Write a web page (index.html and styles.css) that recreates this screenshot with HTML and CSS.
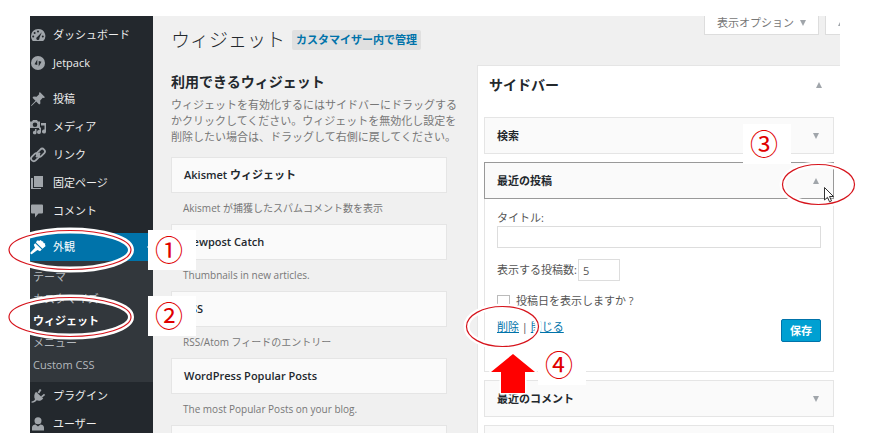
FILE: index.html
```html
<!DOCTYPE html>
<html lang="ja">
<head>
    <meta charset="UTF-8">
    <meta name="viewport" content="width=device-width, initial-scale=1.0">
    <title>ウィジェット</title>
    <link rel="stylesheet" href="styles.css">
</head>
<body>
    <div class="admin">
        <nav class="menu">
            <a href="#" class="menu-item">
                <svg class="icon" viewBox="0 0 16 16"><path d="M8 2a7 7 0 0 0-7 7c0 1.900.7 3.700 1.800 5h10.400A7 7 0 0 0 8 2z"/><g fill="#23282d"><circle cx="8" cy="4.500" r="1"/><circle cx="4.600" cy="6" r="1"/><circle cx="3.200" cy="9.500" r="1"/><circle cx="12.800" cy="9.500" r="1"/><path d="M11.800 5.200 9.400 11a1.600 1.600 0 1 1-2.200-1z"/></g></svg>
                ダッシュボード
            </a>
            <a href="#" class="menu-item">
                <svg class="icon" viewBox="0 0 16 16"><circle cx="8" cy="8" r="7"/><path fill="#23282d" d="M7.300 4.500v5.400L4.500 9.200zM8.700 11.500V6.100l2.800.7z"/></svg>
                Jetpack
            </a>
            <a href="#" class="menu-item group-start">
                <svg class="icon" viewBox="0 0 16 16"><path d="M9.800 1 15 6.200l-1.300.8-1-.2-2.500 2.600.2 3-1.200 1.100-3-3L1.500 15 1 14.500l4.500-4.700-3-3 1.100-1.200 3 .2 2.600-2.500-.2-1z"/></svg>
                投稿
            </a>
            <a href="#" class="menu-item">
                <svg class="icon" viewBox="0 0 16 16"><path fill-rule="evenodd" d="M0 2.500h2L3 1h4l1 1.500h2V9H0zM5 3.500a2.300 2.300 0 1 0 0 4.600 2.300 2.300 0 0 0 0-4.600z"/><path d="M11 4h5v8.500a2 2 0 1 1-1.500-1.900V6.500H11zM9 8.500h2V13a2 2 0 1 1-1.500-1.900V10H9zM5 10h1.500v3.500a1.800 1.800 0 1 1-1.500-1.700z"/></svg>
                メディア
            </a>
            <a href="#" class="menu-item">
                <svg class="icon" viewBox="0 0 16 16"><g fill="none" stroke="currentColor" stroke-width="1.800"><rect x="6.400" y="3" width="9" height="5.400" rx="2.700" transform="rotate(-45 10.900 5.700)"/><rect x=".6" y="7.600" width="9" height="5.400" rx="2.700" transform="rotate(-45 5.100 10.300)"/><path d="m6 10 4-4"/></g></svg>
                リンク
            </a>
            <a href="#" class="menu-item">
                <svg class="icon" viewBox="0 0 16 16"><path d="M4 1h9v11H4zM1 3h2v10h8v1H1z"/></svg>
                固定ページ
            </a>
            <a href="#" class="menu-item">
                <svg class="icon" viewBox="0 0 16 16"><path d="M2 1.500h10a1 1 0 0 1 1 1v7a1 1 0 0 1-1 1H8.500L5 14.500v-4H2a1 1 0 0 1-1-1v-7a1 1 0 0 1 1-1z"/></svg>
                コメント
            </a>
            <a href="#" class="menu-item group-start current">
                <svg class="icon" viewBox="0 0 16 16"><path d="m7 1.500 2.500.3L10.800 1l1 1.300 1.400.2.3 1.400 1.700.7-.2 1.500.7 1-3.200 2.700L6 3.500zM5.200 4.200l6.600 6.200-1.800 1.800-2.500-1.200L2 15c-1 .6-2-.4-1.500-1.400L5 8.700 3.800 5.800z"/></svg>
                外観
            </a>
            <div class="submenu">
                <a href="#">テーマ</a>
                <a href="#">カスタマイズ</a>
                <a href="#" class="active">ウィジェット</a>
                <a href="#">メニュー</a>
                <a href="#">Custom CSS</a>
            </div>
            <a href="#" class="menu-item">
                <svg class="icon" viewBox="0 0 16 16"><path d="m7.500 4.500 2.400-3.600 1.600 1.100-2.300 3.500zM11 8.200l3-2.500 1.200 1.400-3 2.500zM6 3.700l7.200 6.800c-1.800 2.300-4.400 2.800-6.500 1.800C5.500 14 4 15 1.500 14.800l.2-1.600c1.500 0 2.500-.6 3.300-2C3.800 9 4 6 6 3.700z"/></svg>
                プラグイン
            </a>
            <a href="#" class="menu-item">
                <svg class="icon" viewBox="0 0 16 16"><circle cx="8" cy="4.800" r="3.500"/><path d="M2 14.500v-3c0-2 1.800-3 3.600-3L8 10.500l2.400-2c1.800 0 3.600 1 3.600 3v3z"/></svg>
                ユーザー
            </a>
        </nav>

        <main class="content">
            <header class="page-head">
                <h1>ウィジェット</h1>
                <a href="#" class="title-action">カスタマイザー内で管理</a>
                <div class="screen-tabs">
                    <button type="button" class="tab">表示オプション <i class="caret down"></i></button>
                    <button type="button" class="tab tab-help" aria-label="ヘルプ"><i class="caret up"></i></button>
                </div>
            </header>

            <div class="columns">
                <section class="available">
                    <h2>利用できるウィジェット</h2>
                    <p class="intro">ウィジェットを有効化するにはサイドバーにドラッグする<br>かクリックしてください。ウィジェットを無効化し設定を<br>削除したい場合は、ドラッグして右側に戻してください。</p>
                    <h3 class="card">Akismet ウィジェット</h3>
                    <p class="card-text">Akismet が捕獲したスパムコメント数を表示</p>
                    <h3 class="card">Newpost Catch</h3>
                    <p class="card-text">Thumbnails in new articles.</p>
                    <h3 class="card">RSS</h3>
                    <p class="card-text">RSS/Atom フィードのエントリー</p>
                    <h3 class="card">WordPress Popular Posts</h3>
                    <p class="card-text">The most Popular Posts on your blog.</p>
                    <h3 class="card"></h3>
                </section>

                <section class="sidebar-area">
                    <button type="button" class="area-head">サイドバー <i class="caret up"></i></button>
                    <div class="widgets">
                        <button type="button" class="widget-head">検索 <i class="caret down"></i></button>
                        <div class="widget-open">
                            <button type="button" class="widget-head open">最近の投稿 <i class="caret up"></i></button>
                            <form class="widget-form">
                                <label for="title">タイトル:</label>
                                <input type="text" id="title" class="title-input">
                                <div class="row count-row">
                                    <label for="count">表示する投稿数:</label>
                                    <input type="text" id="count" class="count-input" value="5">
                                </div>
                                <div class="row date-row">
                                    <input type="checkbox" id="show-date">
                                    <label for="show-date">投稿日を表示しますか ?</label>
                                </div>
                                <div class="row actions">
                                    <span class="links"><a href="#">削除</a> | <a href="#">閉じる</a></span>
                                    <button type="button" class="save">保存</button>
                                </div>
                            </form>
                        </div>
                        <button type="button" class="widget-head">最近のコメント <i class="caret down"></i></button>
                        <button type="button" class="widget-head"></button>
                    </div>
                </section>
            </div>
        </main>
    </div>

    <!-- 手順の番号と印 -->
    <svg class="marks" width="870" height="433" viewBox="0 0 870 433">
        <g fill="none" stroke="#fff" stroke-width="6">
            <ellipse cx="70" cy="250" rx="61" ry="19.500"/>
            <ellipse cx="70" cy="317" rx="61" ry="19.500"/>
            <ellipse cx="818.500" cy="184.500" rx="36" ry="20"/>
            <ellipse cx="502.500" cy="326.500" rx="36" ry="20"/>
        </g>
        <g fill="none" stroke="#d6141c" stroke-width="1.200">
            <ellipse cx="70" cy="250" rx="61" ry="19.500"/>
            <ellipse cx="70" cy="317" rx="61" ry="19.500"/>
            <ellipse cx="818.500" cy="184.500" rx="36" ry="20"/>
            <ellipse cx="502.500" cy="326.500" rx="36" ry="20"/>
        </g>
        <path fill="#f00" stroke="#fff" stroke-width="3" paint-order="stroke" d="M513 354l22 18h-10v21h-24v-21h-10z"/>
        <path fill="#fff" stroke="#333" d="M824.500 187.500v12.500l3-2.700 2 4.500 2-1-2-4.300h4z"/>
    </svg>
    <span class="step step-1">①</span>
    <span class="step step-2">②</span>
    <span class="step step-3">③</span>
    <span class="step step-4">④</span>
</body>
</html>
```

FILE: styles.css
```css
* {
    box-sizing: border-box;
}

body {
    position: relative;
    margin: 0;
    height: 100vh;
    padding: 16px 30px 0;
    overflow: hidden;
    background: #fff;
    color: #555;
    font-family: "Open Sans", "Noto Sans CJK JP", sans-serif;
    font-size: 11px;
    line-height: 16px;
}

h1, h2, h3, p {
    margin: 0;
}

button, input {
    font: inherit;
    color: inherit;
}

a {
    color: #0073aa;
}

.admin {
    display: flex;
    height: 100%;
    overflow: hidden;
    background: #f0f0f0;
}

/* 左メニュー */
.menu {
    flex: 0 0 123px;
    padding-top: 5px;
    background: #23282d;
}

.menu-item {
    position: relative;
    display: flex;
    align-items: center;
    gap: 7px;
    height: 28px;
    color: #eee;
    text-decoration: none;
    white-space: nowrap;
}

.group-start {
    margin-top: 8px;
}

.icon {
    flex: none;
    width: 16px;
    height: 16px;
    color: #a0a5aa;
    fill: currentColor;
}

.current {
    background: #0073aa;
    color: #fff;
}

.current .icon {
    color: #fff;
}

.current::after {
    content: "";
    position: absolute;
    right: 0;
    border: 6px solid transparent;
    border-right-color: #f0f0f0;
}

.submenu {
    padding: 5px 0 6px;
    background: #32373c;
}

.submenu a {
    display: block;
    padding-left: 3px;
    color: #b4b9be;
    line-height: 22px;
    text-decoration: none;
}

.submenu .active {
    color: #fff;
    font-weight: 600;
}

/* 見出し */
.content {
    flex: 1;
    min-width: 0;
    padding-left: 18px;
}

.page-head {
    display: flex;
    align-items: center;
    gap: 7px;
    height: 47px;
}

h1 {
    color: #23282d;
    font-size: 19px;
    font-weight: 300;
    line-height: 24px;
}

.title-action {
    padding: 2px 4px;
    border-radius: 2px;
    background: #e0e0e0;
    font-weight: 600;
    text-decoration: none;
}

.screen-tabs {
    display: flex;
    gap: 6px;
    align-self: flex-start;
    margin-left: auto;
}

.tab {
    display: flex;
    align-items: center;
    gap: 6px;
    height: 19px;
    padding: 0 12px 4px;
    border: 1px solid #ddd;
    border-top: 0;
    background: #fff;
    color: #777;
}

.tab-help {
    width: 15px;
    padding-right: 0;
    border-right: 0;
    overflow: hidden;
}

.caret {
    border: 3px solid transparent;
}

.caret.down {
    border-top: 6px solid #a0a5aa;
    border-bottom: 0;
}

.caret.up {
    border-top: 0;
    border-bottom: 6px solid #a0a5aa;
}

.columns {
    display: grid;
    grid-template-columns: minmax(0, 276fr) minmax(0, 363fr);
    gap: 30px;
}

/* 利用できるウィジェット */
.available {
    padding-top: 9px;
}

.available h2 {
    color: #23282d;
    font-size: 14px;
    line-height: 20px;
}

.intro {
    margin: 5px 0 12px;
    color: #777;
    white-space: nowrap;
}

.card {
    height: 36px;
    padding-left: 12px;
    border: 1px solid #e5e5e5;
    background: #fafafa;
    color: #23282d;
    font-size: 11px;
    font-weight: 600;
    line-height: 34px;
}

.card-text {
    padding-left: 12px;
    color: #777;
    font-size: 10px;
    line-height: 31px;
}

/* サイドバー */
.sidebar-area {
    margin-top: 2px;
    border: 1px solid #e5e5e5;
    border-right: 0;
    background: #fff;
}

.area-head,
.widget-head {
    display: flex;
    align-items: center;
    justify-content: space-between;
    width: 100%;
    border: 0;
    background: none;
    color: #23282d;
    font-weight: 600;
    text-align: left;
}

.area-head {
    height: 38px;
    padding: 0 18px 0 11px;
    font-size: 14px;
}

.widgets {
    display: flex;
    flex-direction: column;
    gap: 8px;
    padding: 13px 6px;
}

.widget-head {
    height: 37px;
    padding: 0 14px 0 12px;
    border: 1px solid #e5e5e5;
    background: #fafafa;
}

.widget-head.open {
    border-color: #999;
}

.widget-form {
    height: 173px;
    padding: 11px 12px;
    border: 1px solid #e5e5e5;
    border-top: 0;
}

.widget-form > label {
    display: block;
}

.title-input,
.count-input {
    height: 22px;
    padding: 0 4px;
    border: 1px solid #ddd;
    background: #fff;
}

.title-input {
    display: block;
    width: 100%;
}

.count-input {
    width: 42px;
}

.row {
    display: flex;
    align-items: center;
}

.count-row {
    gap: 1px;
    margin-top: 11px;
}

.date-row {
    gap: 6px;
    margin-top: 12px;
}

.date-row input {
    appearance: none;
    width: 13px;
    height: 13px;
    margin: 0;
    border: 1px solid #bbb;
    background: #fff;
}

.actions {
    align-items: flex-start;
    justify-content: space-between;
    margin-top: 10px;
}

.save {
    height: 23px;
    padding: 0 8px;
    border: 1px solid #0073aa;
    border-radius: 2px;
    background: #00a0d2;
    color: #fff;
    font-weight: 600;
}

/* 手順の印 */
.marks {
    position: absolute;
    top: 0;
    left: 0;
    pointer-events: none;
}

.step {
    position: absolute;
    width: 48px;
    height: 40px;
    padding-right: 6px;
    background: #fff;
    color: #e00000;
    font-family: "Noto Sans CJK JP", sans-serif;
    font-size: 28px;
    line-height: 38px;
    text-align: center;
}

.step-1 {
    top: 230px;
    left: 148px;
}

.step-2 {
    top: 296px;
    left: 148px;
}

.step-3 {
    top: 124px;
    left: 743px;
}

.step-4 {
    top: 345px;
    left: 538px;
}
```
